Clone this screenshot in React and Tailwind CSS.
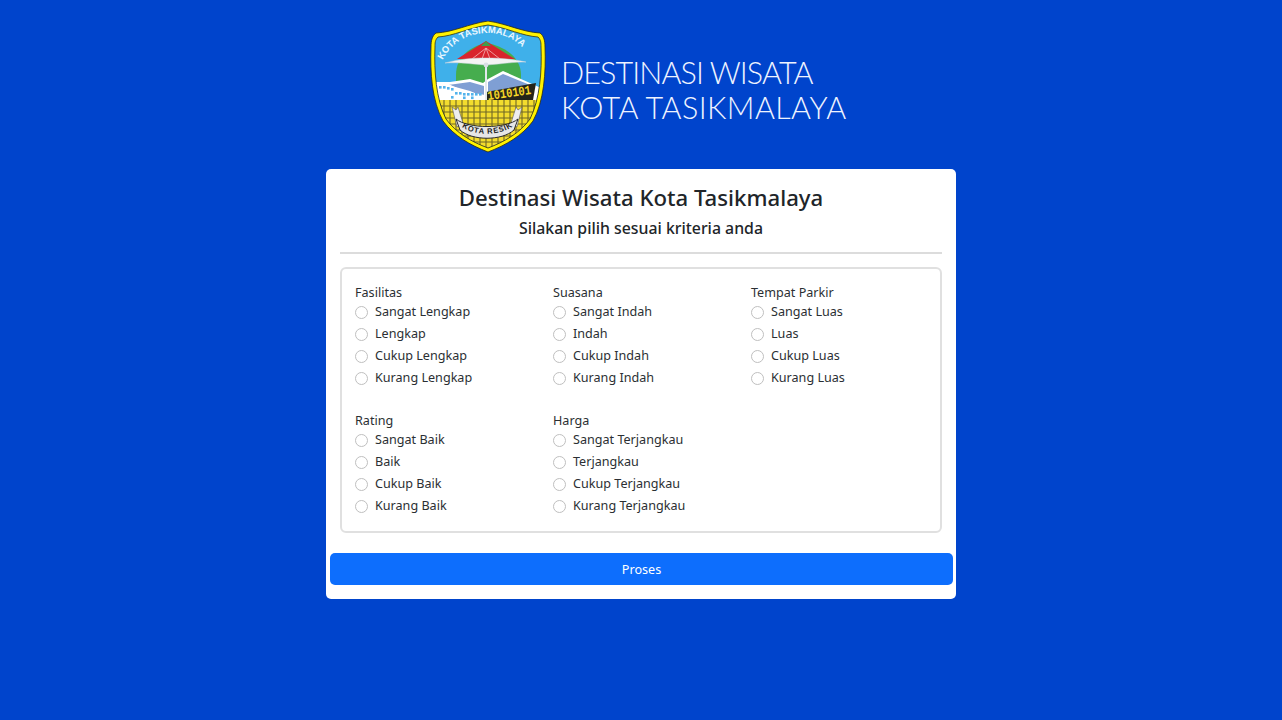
const groups = [
  { title: "Fasilitas", options: ["Sangat Lengkap", "Lengkap", "Cukup Lengkap", "Kurang Lengkap"] },
  { title: "Suasana", options: ["Sangat Indah", "Indah", "Cukup Indah", "Kurang Indah"] },
  { title: "Tempat Parkir", options: ["Sangat Luas", "Luas", "Cukup Luas", "Kurang Luas"] },
  { title: "Rating", options: ["Sangat Baik", "Baik", "Cukup Baik", "Kurang Baik"] },
  { title: "Harga", options: ["Sangat Terjangkau", "Terjangkau", "Cukup Terjangkau", "Kurang Terjangkau"] },
];

function Crest() {
  return (
    <svg width="116" height="132" viewBox="0 0 116 132" className="shrink-0">
      <defs>
        <clipPath id="shield">
          <path d="M8 16 C24 15 38 7 58 4 C78 7 92 15 108 16 C111 19 111 22 111 26 C112 50 110 78 100 98 C90 112 74 121 58 127 C42 121 26 112 16 98 C6 78 4 50 5 26 C5 22 5 19 8 16 Z" />
        </clipPath>
        <path id="arc" d="M12 40 C22 20 40 12 57 12 C74 12 92 20 102 40" fill="none" />
        <path id="ribbon" d="M29 103 C40 116 72 116 86 103" fill="none" />
      </defs>
      <path d="M6 12 C24 11 38 3 58 0 C78 3 92 11 110 12 C114 15 115 20 115 26 C116 52 114 80 103 100 C92 115 76 124 58 131 C40 124 24 115 13 100 C2 80 0 52 1 26 C1 20 2 15 6 12 Z" fill="#fff200" stroke="#2a2a10" strokeWidth="0.8" />
      <g clipPath="url(#shield)">
        <rect x="0" y="0" width="116" height="132" fill="#3fb0ea" />
        <path d="M26 54 C26 36 40 25 57 22 C74 25 91 36 91 54 L91 64 L26 64 Z" fill="#46ad4e" />
        <path d="M0 61 L20 61 L40 58 L53 62 L58 58 L73 50 L100 62 L111 67 L111 80 L0 80 Z" fill="#fff" />
        <path d="M18 64 L40 61 L54 65 L54 76 L40 70 Z" fill="#7f9fd4" />
        <path d="M58 61 L73 53 L100 64 L58 74 Z" fill="#7f9fd4" />
        <path d="M0 62 L16 62 L34 70 L55 74 L55 79 L0 79 Z" fill="#fff" />
        <g fill="#53b3ec">
          <rect x="9" y="65" width="2.6" height="2.6" />
          <rect x="13" y="65" width="2.6" height="2.6" />
          <rect x="17" y="66" width="2.6" height="2.6" />
          <rect x="21" y="67" width="2.6" height="2.6" />
          <rect x="25" y="71" width="2.6" height="2.6" />
          <rect x="29" y="71" width="2.6" height="2.6" />
          <rect x="33" y="72" width="2.6" height="2.6" />
          <rect x="37" y="72" width="2.6" height="2.6" />
          <rect x="41" y="72" width="2.6" height="2.6" />
          <rect x="45" y="72" width="2.6" height="2.6" />
          <rect x="49" y="72" width="2.6" height="2.6" />
          <rect x="21" y="75" width="2.6" height="2.6" />
          <rect x="33" y="75.5" width="2.6" height="2.6" />
          <rect x="41" y="75.5" width="2.6" height="2.6" />
        </g>
        <path d="M56 71 L106 62 L103 79 L56 80 Z" fill="#25251a" />
        <rect x="0" y="79" width="116" height="53" fill="#f3dc2e" />
        <path d="M6 85 H110 M6 91 H110 M6 97 H110 M6 103 H110 M6 109 H110 M6 115 H110 M6 121 H110 M14 79 V132 M20 79 V132 M26 79 V132 M32 79 V132 M38 79 V132 M44 79 V132 M50 79 V132 M56 79 V132 M62 79 V132 M68 79 V132 M74 79 V132 M80 79 V132 M86 79 V132 M92 79 V132 M98 79 V132 M104 79 V132" stroke="#6f6727" strokeWidth="1.1" />
      </g>
      <path d="M8 16 C24 15 38 7 58 4 C78 7 92 15 108 16 C111 19 111 22 111 26 C112 50 110 78 100 98 C90 112 74 121 58 127 C42 121 26 112 16 98 C6 78 4 50 5 26 C5 22 5 19 8 16 Z" fill="none" stroke="#2f2f14" strokeWidth="0.8" />
      <path d="M56 20 L27 38 L85 38 Z" fill="#d9242c" />
      <path d="M56 20 L51 25 L61 25 Z" fill="#3f9f4a" />
      <path d="M56 27 L52 38 M56 27 L60 38 M56 27 L42 38 M56 27 L70 38" stroke="#f4b5b5" strokeWidth="0.8" />
      <path d="M15 42 C30 38 42 37 56 37 C70 37 82 38 96 41 C82 41 72 43 56 44 C40 43 30 41 15 42 Z" fill="#f4f4f4" stroke="#c9d3dc" strokeWidth="0.5" />
      <path d="M56 43 V79" stroke="#e3e8ee" strokeWidth="2" />
      <circle cx="56" cy="44" r="2.4" fill="#d9dee4" />
      <text x="58" y="79" className="font-['Liberation_Mono',monospace]" fill="#f6d628" fontSize="13" fontWeight="700" transform="rotate(-8 58 79)" textLength="44" lengthAdjust="spacingAndGlyphs">1010101</text>
      <path d="M22 86 L26 89 L28 86 L33 102 L27 106 Z M92 86 L88 89 L86 86 L81 102 L87 106 Z" fill="#eeeeee" stroke="#555" strokeWidth="0.6" />
      <path d="M26 98 C38 108 76 108 88 98 L84 109 C72 120 42 120 30 109 Z" fill="#e6e6e6" stroke="#2a2a2a" strokeWidth="1" />
      <text className="font-['Liberation_Sans',sans-serif]" fill="#eaf7ff" fontSize="9.4" fontWeight="700">
        <textPath href="#arc" startOffset="1">KOTA TASIKMALAYA</textPath>
      </text>
      <text className="font-['Liberation_Sans',sans-serif]" fill="#222" fontSize="7.6" fontWeight="700" letterSpacing="0.8">
        <textPath href="#ribbon" startOffset="4">KOTA RESIK</textPath>
      </text>
    </svg>
  );
}

function RadioGroup({ title, options }) {
  return (
    <div className="h-[128px]">
      <div className="h-[19px] leading-[22px]">{title}</div>
      {options.map((option) => (
        <label key={option} className="flex items-center h-[22px] gap-[7px]">
          <span className="w-[13px] h-[13px] rounded-full border border-[#bfbfbf] bg-white shrink-0" />
          <span className="leading-5">{option}</span>
        </label>
      ))}
    </div>
  );
}

export default function App() {
  return (
    <div className="min-h-screen bg-[#0044cc] flex flex-col font-['Noto_Sans',sans-serif] text-[#2b2f33]">
      <div className="flex items-center h-[169px] ml-[430px] pt-[5px]">
        <Crest />
        <div className="ml-[15px] mt-[6px] text-[#eef3ff] font-['Lato',sans-serif] font-light text-[30.5px] leading-[35px] whitespace-nowrap">
          <div className="tracking-[-0.9px]">DESTINASI WISATA</div>
          <div className="tracking-[0.4px]">KOTA TASIKMALAYA</div>
        </div>
      </div>

      <div className="w-[630px] h-[430px] ml-[326px] bg-white rounded-[5px] pt-[14px] flex flex-col">
        <h1 className="text-center text-[22.2px] leading-[30px] font-medium text-[#212529]">Destinasi Wisata Kota Tasikmalaya</h1>
        <h2 className="text-center text-[15.85px] leading-[22px] font-medium mt-[4px] text-[#212529]">Silakan pilih sesuai kriteria anda</h2>
        <hr className="mx-[14px] mt-[13px] border-t-2 border-[#dcdcdc]" />
        <div className="mx-[14px] mt-[13px] h-[266px] border-2 border-[#e0e0e0] rounded-[6px] pl-[13px] pt-[13px] grid grid-cols-[198px_198px_198px] text-[12.6px]">
          {groups.map((g) => (
            <RadioGroup key={g.title} title={g.title} options={g.options} />
          ))}
        </div>
        <button className="ml-[4px] mr-[3px] mt-[20px] h-[32px] pt-[2px] bg-[#0d6efd] text-white text-[12.6px] rounded-[5px]">Proses</button>
      </div>
    </div>
  );
}
